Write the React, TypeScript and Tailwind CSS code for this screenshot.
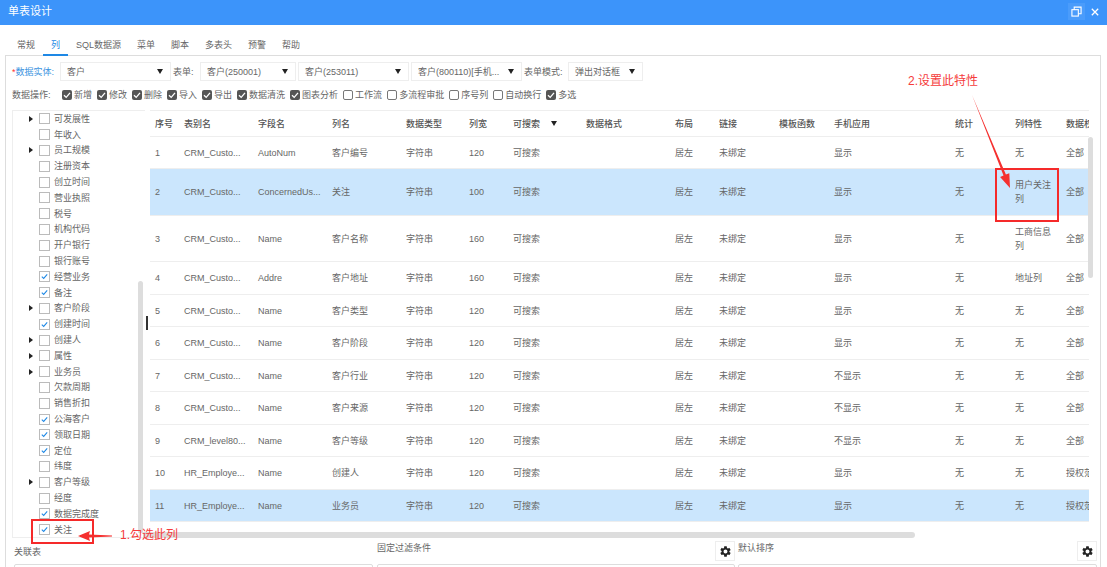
import { MdSettings } from "react-icons/md"

const treeItems = [
  { label: "可发展性", arrow: true },
  { label: "年收入" },
  { label: "员工规模", arrow: true },
  { label: "注册资本" },
  { label: "创立时间" },
  { label: "营业执照" },
  { label: "税号" },
  { label: "机构代码" },
  { label: "开户银行" },
  { label: "银行账号" },
  { label: "经营业务", checked: true },
  { label: "备注", checked: true },
  { label: "客户阶段", arrow: true },
  { label: "创建时间", checked: true },
  { label: "创建人", arrow: true },
  { label: "属性", arrow: true },
  { label: "业务员", arrow: true },
  { label: "欠款周期" },
  { label: "销售折扣" },
  { label: "公海客户", checked: true },
  { label: "领取日期", checked: true },
  { label: "定位", checked: true },
  { label: "纬度" },
  { label: "客户等级", arrow: true },
  { label: "经度" },
  { label: "数据完成度", checked: true },
  { label: "关注", checked: true },
]

const operations = [
  { label: "新增", checked: true },
  { label: "修改", checked: true },
  { label: "删除", checked: true },
  { label: "导入", checked: true },
  { label: "导出", checked: true },
  { label: "数据清洗", checked: true },
  { label: "图表分析", checked: true },
  { label: "工作流" },
  { label: "多流程审批" },
  { label: "序号列" },
  { label: "自动换行" },
  { label: "多选", checked: true },
]

const tabs = ["常规", "列", "SQL数据源", "菜单", "脚本", "多表头", "预警", "帮助"]

const columns = "grid grid-cols-[29px_74px_74px_74px_63px_44px_73px_89px_44px_60px_55px_121px_60px_51px_28px]"

const headers = ["序号", "表别名", "字段名", "列名", "数据类型", "列宽", "可搜索", "数据格式", "布局", "链接", "模板函数", "手机应用", "统计", "列特性", "数据权限"]

const rows = [
  { h: "h-[32px]", table: "CRM_Custo...", field: "AutoNum", name: "客户编号", width: "120", mobile: "显示", feature: "无", scope: "全部" },
  { h: "h-[47px]", table: "CRM_Custo...", field: "ConcernedUs...", name: "关注", width: "100", mobile: "显示", feature: "用户关注列", scope: "全部", active: true },
  { h: "h-[46px]", table: "CRM_Custo...", field: "Name", name: "客户名称", width: "160", mobile: "显示", feature: "工商信息列", scope: "全部" },
  { h: "h-[33px]", table: "CRM_Custo...", field: "Addre", name: "客户地址", width: "160", mobile: "显示", feature: "地址列", scope: "全部" },
  { h: "h-[32px]", table: "CRM_Custo...", field: "Name", name: "客户类型", width: "120", mobile: "显示", feature: "无", scope: "全部" },
  { h: "h-[33px]", table: "CRM_Custo...", field: "Name", name: "客户阶段", width: "120", mobile: "显示", feature: "无", scope: "全部" },
  { h: "h-[32px]", table: "CRM_Custo...", field: "Name", name: "客户行业", width: "120", mobile: "不显示", feature: "无", scope: "全部" },
  { h: "h-[33px]", table: "CRM_Custo...", field: "Name", name: "客户来源", width: "120", mobile: "不显示", feature: "无", scope: "全部" },
  { h: "h-[32px]", table: "CRM_level80...", field: "Name", name: "客户等级", width: "120", mobile: "不显示", feature: "无", scope: "全部" },
  { h: "h-[33px]", table: "HR_Employe...", field: "Name", name: "创建人", width: "120", mobile: "显示", feature: "无", scope: "授权范围" },
  { h: "h-[32px]", table: "HR_Employe...", field: "Name", name: "业务员", width: "120", mobile: "显示", feature: "无", scope: "授权范围", active: true },
]

function Triangle() {
  return <span className="block w-0 h-0 border-x-[3.5px] border-x-transparent border-t-[5px] border-t-[#222]" />
}

function Select({ text, width }: { text: string; width: string }) {
  return (
    <div className={`${width} h-[19px] flex items-center justify-between pl-[6px] pr-[7px] border border-[#eeeeee] shrink-0`}>
      <span className="whitespace-nowrap">{text}</span>
      <Triangle />
    </div>
  )
}

function OpCheck({ label, checked }: { label: string; checked?: boolean }) {
  return (
    <label className="flex items-center gap-[2px] whitespace-nowrap">
      {checked ? (
        <span className="w-[10px] h-[10px] rounded-[2px] bg-[#555555] flex items-center justify-center">
          <svg viewBox="0 0 10 10" className="w-[10px] h-[10px]">
            <path d="M2 5.2 L4.2 7.4 L8 2.8" fill="none" stroke="#fff" strokeWidth="1.3" />
          </svg>
        </span>
      ) : (
        <span className="w-[10px] h-[10px] rounded-[2px] border border-[#777777] bg-white" />
      )}
      <span>{label}</span>
    </label>
  )
}

function TreeRow({ label, arrow, checked }: { label: string; arrow?: boolean; checked?: boolean }) {
  return (
    <div className="h-[15.8px] flex items-center">
      <span className="w-[10px] shrink-0">
        {arrow && <span className="block w-0 h-0 border-y-[3px] border-y-transparent border-l-[4px] border-l-[#222]" />}
      </span>
      <span className="w-[11px] h-[11px] shrink-0 border border-[#bbbbbb] bg-white flex items-center justify-center">
        {checked && (
          <svg viewBox="0 0 11 11" className="w-[11px] h-[11px]">
            <path d="M2.2 5.6 L4.5 7.8 L8.8 3" fill="none" stroke="#1e88e5" strokeWidth="1.3" />
          </svg>
        )}
      </span>
      <span className="ml-[4px] whitespace-nowrap">{label}</span>
    </div>
  )
}

function GearButton() {
  return (
    <div className="w-[20px] h-[20px] border border-[#eeeeee] flex items-center justify-center text-[#222]">
      <MdSettings className="w-[13px] h-[13px]" />
    </div>
  )
}

export default function App() {
  return (
    <div className="relative w-[1107px] h-[567px] overflow-hidden bg-white text-[9px] leading-[14px] text-[#666666] font-['Liberation_Sans','Noto_Sans_CJK_SC',sans-serif]">
      <header className="h-[25px] bg-[#3c94fa] flex items-center justify-between pl-[8px] pr-[8px] text-white">
        <span className="text-[11px] -mt-[4px]">单表设计</span>
        <div className="flex items-center gap-[6px] -mt-[2px]">
          <span className="w-[17px] h-[17px] bg-[#4a9cfb] flex items-center justify-center">
            <svg viewBox="0 0 12 12" className="w-[11px] h-[11px]" fill="none" stroke="#fff" strokeWidth="1.2">
              <rect x="1" y="4" width="7" height="7" />
              <path d="M3.5 4 V1.2 H11 V8.5 H8" />
            </svg>
          </span>
          <svg viewBox="0 0 10 10" className="w-[8px] h-[8px]" fill="none" stroke="#fff" strokeWidth="1.6">
            <path d="M1 1 L9 9 M9 1 L1 9" />
          </svg>
        </div>
      </header>

      <nav className="h-[31px] -mb-[1px] pl-[9px] flex relative z-10">
        {tabs.map((t) => (
          <div
            key={t}
            className={t === "列" ? "px-[8px] pt-[13px] border-b-2 border-[#1e88e5] text-[#1e88e5]" : "px-[8px] pt-[13px]"}
          >
            {t}
          </div>
        ))}
      </nav>

      <main className="ml-[5px] w-[1096px] h-[600px] border-x border-t border-[#dddddd] pl-[6px]">
        <div className="mt-[6px] flex items-center">
          <span className="w-[48px] shrink-0 whitespace-nowrap text-[#3c94e0]">
            <span className="text-[#ff3333]">*</span>数据实体:
          </span>
          <Select text="客户" width="w-[111px]" />
          <span className="ml-[2px] w-[27px] shrink-0">表单:</span>
          <Select text="客户(250001)" width="w-[96px]" />
          <span className="w-[2px]" />
          <Select text="客户(253011)" width="w-[111px]" />
          <span className="w-[2px]" />
          <Select text="客户(800110)[手机..." width="w-[111px]" />
          <span className="ml-[2px] w-[44px] shrink-0 whitespace-nowrap">表单模式:</span>
          <Select text="弹出对话框" width="w-[75px]" />
        </div>

        <div className="mt-[7px] h-[14px] flex items-center">
          <span className="w-[50px] shrink-0">数据操作:</span>
          <div className="flex items-center gap-[5px]">
            {operations.map((o) => (
              <OpCheck key={o.label} label={o.label} checked={o.checked} />
            ))}
          </div>
        </div>

        <div className="mt-[8px] flex h-[428px]">
          <aside className="relative w-[133px] shrink-0 border-l border-t border-b border-[#eeeeee] pl-[16px]">
            {treeItems.map((item) => (
              <TreeRow key={item.label} label={item.label} arrow={item.arrow} checked={item.checked} />
            ))}
            <div className="absolute left-[125px] top-[170px] bottom-[4px] w-[5px] rounded-t-full bg-[#dddddd]" />
          </aside>

          <div className="relative w-[5px] shrink-0">
            <span className="absolute left-[1px] top-[206px] w-[2px] h-[14px] bg-[#333333]" />
          </div>

          <section className="relative w-[944px]">
            <div className="w-[939px] overflow-hidden">
              <div className={`${columns} h-[27px] items-center border-t border-b border-[#eeeeee] font-medium text-[#555555]`}>
                {headers.map((h) => (
                  <div key={h} className="pl-[5px] whitespace-nowrap overflow-hidden flex items-center">
                    {h}
                    {h === "可搜索" && (
                      <span className="ml-[11px]">
                        <Triangle />
                      </span>
                    )}
                  </div>
                ))}
              </div>
              {rows.map((r, i) => {
                const cells = [String(i + 1), r.table, r.field, r.name, "字符串", r.width, "可搜索", "", "居左", "未绑定", "", r.mobile, "无", r.feature, r.scope]
                return (
                  <div
                    key={i}
                    className={`${columns} ${r.h} items-center border-b border-[#eeeeee] ${r.active ? "bg-[#cbe6fd]" : "bg-white"}`}
                  >
                    {cells.map((c, j) => (
                      <div key={j} className={j === 13 ? "px-[5px]" : "pl-[5px] whitespace-nowrap overflow-hidden"}>
                        {c}
                      </div>
                    ))}
                  </div>
                )
              })}
            </div>
            <div className="-ml-[7px] mt-[10px] w-[772px] h-[6px] rounded-r-full bg-[#dddddd]" />
            <div className="absolute left-[938px] top-[27px] w-[5px] h-[141px] rounded-full bg-[#dddddd]" />
          </section>
        </div>

        <div className="mt-[3px] flex">
          <div className="w-[359px] ml-[2px] shrink-0">
            <div className="h-[20px] pt-[4px]">关联表</div>
            <div className="mt-[3px] h-[20px] border border-[#dddddd] rounded-[2px]" />
          </div>
          <div className="w-[358px] ml-[4px] shrink-0">
            <div className="h-[20px] flex justify-between">
              <span>固定过滤条件</span>
              <GearButton />
            </div>
            <div className="mt-[3px] h-[20px] border border-[#dddddd] rounded-[2px]" />
          </div>
          <div className="w-[359px] ml-[3px] shrink-0">
            <div className="h-[20px] flex justify-between">
              <span>默认排序</span>
              <GearButton />
            </div>
            <div className="mt-[3px] h-[20px] border border-[#dddddd] rounded-[2px]" />
          </div>
        </div>
      </main>

      {/* annotations drawn over the screenshot */}
      <div className="absolute left-[31px] top-[519px] w-[63px] h-[25px] border-2 border-[#f52a2a]" />
      <div className="absolute left-[995px] top-[168px] w-[64px] h-[54px] border-2 border-[#f52a2a]" />
      <span className="absolute left-[120px] top-[527px] text-[12px] leading-[16px] text-[#f53b3b] whitespace-nowrap">1.勾选此列</span>
      <span className="absolute left-[908px] top-[73px] text-[12px] leading-[16px] text-[#f53b3b] whitespace-nowrap">2.设置此特性</span>
      <svg className="absolute left-0 top-0 w-[1107px] h-[567px] pointer-events-none" viewBox="0 0 1107 567">
        <polygon points="972,95 1005.9,174.6 1009.3,173.2 1010,188 1000.1,177 1003.5,175.6" fill="#f5302f" />
        <polygon points="78,536 90,531 89,534.5 112,535.5 112,536.5 89,537.5 90,541" fill="#f5302f" />
      </svg>
    </div>
  )
}
